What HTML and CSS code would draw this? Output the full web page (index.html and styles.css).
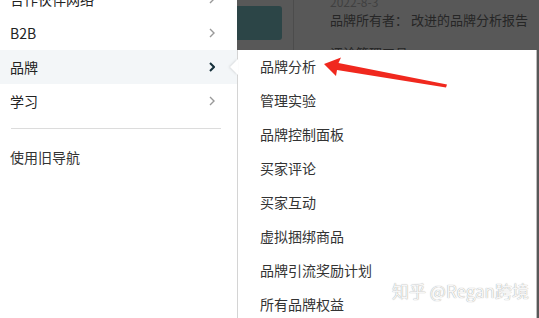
FILE: index.html
```html
<!DOCTYPE html>
<html lang="zh-CN">
<head>
    <meta charset="UTF-8">
    <title>品牌导航</title>
    <link rel="stylesheet" href="styles.css">
</head>
<body>
    <div class="page">
        <!-- Left navigation -->
        <nav class="side-nav">
            <ul class="nav-list">
                <li class="nav-item">合作伙伴网络<svg class="chev" viewBox="0 0 6 10"><path d="M1 1 L5 5 L1 9"/></svg></li>
                <li class="nav-item">B2B<svg class="chev" viewBox="0 0 6 10"><path d="M1 1 L5 5 L1 9"/></svg></li>
                <li class="nav-item active">品牌<svg class="chev" viewBox="0 0 6 10"><path d="M1 1 L5 5 L1 9"/></svg></li>
                <li class="nav-item">学习<svg class="chev" viewBox="0 0 6 10"><path d="M1 1 L5 5 L1 9"/></svg></li>
            </ul>
            <div class="nav-divider"></div>
            <div class="nav-item plain">使用旧导航</div>
        </nav>

        <div class="main">
            <!-- Dimmed page content behind the menu -->
            <div class="dim-content">
                <div class="dim-button"></div>
                <div class="dim-sep"></div>
                <div class="dim-text">
                    <div class="dim-date">2022-8-3</div>
                    <div class="dim-title">品牌所有者： 改进的品牌分析报告</div>
                    <div class="dim-line">评论管理工具</div>
                </div>
            </div>

            <div class="sub-row">
                <div class="sub-menu">
                    <span class="sub-notch"></span>
                    <ul class="sub-list">
                        <li>品牌分析</li>
                        <li>管理实验</li>
                        <li>品牌控制面板</li>
                        <li>买家评论</li>
                        <li>买家互动</li>
                        <li>虚拟捆绑商品</li>
                        <li>品牌引流奖励计划</li>
                        <li>所有品牌权益</li>
                    </ul>
                </div>
            </div>
        </div>

        <!-- Annotation arrow -->
        <svg class="mark-arrow" width="539" height="318" viewBox="0 0 539 318">
            <polygon points="324,64 341,57.5 338.5,63 447,84.5 446,87.5 337,70 336,76" fill="#f0281e"/>
        </svg>

        <div class="watermark">知乎 @Regan跨境</div>
    </div>
</body>
</html>
```

FILE: styles.css
```css
html, body {
    margin: 0;
    padding: 0;
}

body {
    font-family: "Noto Sans CJK SC", "Liberation Sans", sans-serif;
    font-size: 14px;
    color: #222;
}

.page {
    position: relative;
    width: 539px;
    height: 318px;
    display: flex;
    overflow: hidden;
    background: #585858;
}

/* Left navigation */
.side-nav {
    width: 237px;
    flex-shrink: 0;
    background: #fff;
}

.nav-list {
    list-style: none;
    margin: -18px 0 0;
    padding: 0;
}

.nav-item {
    height: 34px;
    display: flex;
    align-items: center;
    justify-content: space-between;
    padding: 0 22px 0 10px;
}

.nav-item.active {
    background: #f3f6f8;
}

.nav-item.plain {
    margin-top: 11px;
    color: #333;
}

.chev {
    width: 6px;
    height: 10px;
    fill: none;
    stroke: #999;
    stroke-width: 1.4;
}

.nav-item.active .chev {
    stroke: #15303b;
    stroke-width: 2;
}

.nav-divider {
    height: 1px;
    margin: 10px 16px 0 11px;
    background: #dcdcdc;
}

/* Right side */
.main {
    flex: 1;
    min-width: 0;
    display: flex;
    flex-direction: column;
}

.dim-content {
    height: 50px;
    flex-shrink: 0;
    display: flex;
    overflow: hidden;
}

.dim-button {
    width: 45px;
    height: 34px;
    flex-shrink: 0;
    margin-top: 6px;
    background: #2c4547;
    border-radius: 0 3px 3px 0;
}

.dim-sep {
    width: 1px;
    flex-shrink: 0;
    margin-left: 11px;
    background: #4c4c4c;
}

.dim-text {
    flex-shrink: 0;
    margin-left: 36px;
    margin-top: -6px;
    white-space: nowrap;
}

.dim-date {
    font-size: 12px;
    line-height: 16px;
    color: #404040;
}

.dim-title {
    font-size: 13px;
    line-height: 20px;
    color: #262626;
}

.dim-line {
    margin-top: 14px;
    font-size: 13px;
    line-height: 18px;
    color: #262626;
}

.sub-row {
    flex: 1;
    display: flex;
}

.sub-menu {
    position: relative;
    width: 300px;
    box-sizing: border-box;
    background: #fff;
    border-left: 1px solid #d4d4d4;
    border-right: 1px solid #bdbdbd;
}

.sub-notch {
    position: absolute;
    left: -8px;
    top: 9px;
    width: 0;
    height: 0;
    border-top: 8px solid transparent;
    border-bottom: 8px solid transparent;
    border-right: 8px solid #fff;
    filter: drop-shadow(-1px 0 1px rgba(0, 0, 0, 0.12));
}

.sub-list {
    list-style: none;
    margin: 0;
    padding: 0;
}

.sub-list li {
    height: 34px;
    line-height: 32px;
    padding-left: 22px;
    color: #333;
}

/* Overlays */
.mark-arrow {
    position: absolute;
    left: 0;
    top: 0;
    pointer-events: none;
}

.watermark {
    position: absolute;
    left: 392px;
    top: 280px;
    font-size: 17px;
    line-height: 22px;
    color: #f6f6f6;
    text-shadow: 0 0 1px rgba(0, 0, 0, 0.45);
    white-space: nowrap;
}
```
